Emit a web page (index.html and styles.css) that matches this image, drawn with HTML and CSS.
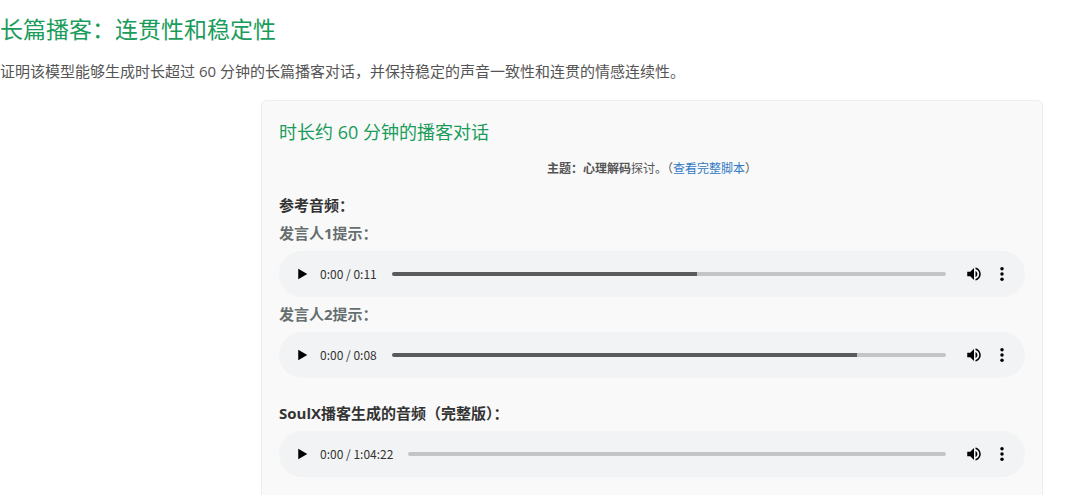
FILE: index.html
```html
<!DOCTYPE html>
<html lang="zh-CN">

<head>
    <meta charset="utf-8">
    <meta name="viewport" content="width=device-width, initial-scale=1">
    <title>长篇播客：连贯性和稳定性</title>
    <link rel="stylesheet" href="styles.css">
</head>

<body>
    <!-- shared player icons -->
    <svg class="sprite" aria-hidden="true">
        <symbol id="play" viewBox="0 0 24 24">
            <path d="M7 5v14l12-7z" />
        </symbol>
        <symbol id="volume" viewBox="0 0 24 24">
            <path d="M3 9v6h4l5 5V4L7 9H3zm13.500 3c0-1.770-1.020-3.290-2.500-4.030v8.050c1.480-.730 2.500-2.250 2.500-4.020zM14 3.230v2.060c2.890.860 5 3.540 5 6.710s-2.110 5.850-5 6.710v2.060c4.010-.910 7-4.490 7-8.770s-2.990-7.860-7-8.770z" />
        </symbol>
        <symbol id="more" viewBox="0 0 24 24">
            <circle cx="12" cy="5" r="2.300" />
            <circle cx="12" cy="12" r="2.300" />
            <circle cx="12" cy="19" r="2.300" />
        </symbol>
    </svg>

    <main>
        <h2 class="title">长篇播客：连贯性和稳定性</h2>
        <p class="intro">证明该模型能够生成时长超过 60 分钟的长篇播客对话，并保持稳定的声音一致性和连贯的情感连续性。</p>

        <section class="card">
            <h3 class="card-title">时长约 60 分钟的播客对话</h3>
            <p class="topic"><strong>主题：心理解码</strong>探讨。（<a href="#script">查看完整脚本</a>）</p>

            <h4 class="label">参考音频：</h4>

            <h5 class="label speaker">发言人1提示：</h5>
            <div class="player">
                <button type="button" class="btn" aria-label="播放"><svg><use href="#play" /></svg></button>
                <span class="time">0:00 / 0:11</span>
                <input type="range" class="seek" min="0" max="11" value="0" aria-label="播放进度" style="--buffered: 55%">
                <button type="button" class="btn" aria-label="静音"><svg><use href="#volume" /></svg></button>
                <button type="button" class="btn menu" aria-label="更多选项"><svg><use href="#more" /></svg></button>
            </div>

            <h5 class="label speaker">发言人2提示：</h5>
            <div class="player">
                <button type="button" class="btn" aria-label="播放"><svg><use href="#play" /></svg></button>
                <span class="time">0:00 / 0:08</span>
                <input type="range" class="seek" min="0" max="8" value="0" aria-label="播放进度" style="--buffered: 84%">
                <button type="button" class="btn" aria-label="静音"><svg><use href="#volume" /></svg></button>
                <button type="button" class="btn menu" aria-label="更多选项"><svg><use href="#more" /></svg></button>
            </div>

            <h4 class="label generated">SoulX播客生成的音频（完整版）：</h4>
            <div class="player">
                <button type="button" class="btn" aria-label="播放"><svg><use href="#play" /></svg></button>
                <span class="time">0:00 / 1:04:22</span>
                <input type="range" class="seek" min="0" max="3862" value="0" aria-label="播放进度" style="--buffered: 0%">
                <button type="button" class="btn" aria-label="静音"><svg><use href="#volume" /></svg></button>
                <button type="button" class="btn menu" aria-label="更多选项"><svg><use href="#more" /></svg></button>
            </div>
        </section>
    </main>
</body>

</html>
```
FILE: styles.css
```css
* {
    box-sizing: border-box;
}

body {
    margin: 0;
    padding-top: 14px;
    background: #fff;
    color: #555;
    font-family: "Open Sans", "Noto Sans CJK SC", sans-serif;
    font-size: 15px;
}

h2, h3, h4, h5, p {
    margin: 0;
}

.sprite {
    display: none;
}

.title {
    margin-bottom: 15px;
    color: #1a9c5b;
    font-size: 23px;
    font-weight: 400;
    line-height: 30px;
}

.intro {
    margin-bottom: 17px;
    line-height: 24px;
}

.card {
    margin: 0 37px 0 261px;
    padding: 18px 17px 24px;
    background: #f9f9f9;
    border: 1px solid #ededed;
    border-radius: 6px;
}

.card-title {
    margin-bottom: 14px;
    color: #1a9c5b;
    font-size: 18px;
    font-weight: 400;
    line-height: 26px;
}

.topic {
    margin-bottom: 12px;
    font-size: 12px;
    line-height: 20px;
    text-align: center;
}

.topic a {
    color: #2f78c4;
    text-decoration: none;
}

.label {
    color: #333;
    font-size: 15px;
    font-weight: 700;
    line-height: 28px;
}

.speaker {
    color: #666f6f;
}

.generated {
    margin-top: 21px;
}

/* audio player */
.player {
    display: flex;
    align-items: center;
    height: 46px;
    margin: 4px 0 3px;
    padding: 0 11px;
    background: #f1f3f4;
    border-radius: 23px;
}

.btn {
    flex: none;
    display: flex;
    align-items: center;
    justify-content: center;
    width: 24px;
    height: 24px;
    padding: 0;
    background: none;
    border: none;
    cursor: pointer;
}

.btn svg {
    width: 18px;
    height: 18px;
    fill: #000;
}

.menu {
    margin-left: 4px;
}

.time {
    margin: 0 15px 0 6px;
    color: #333;
    font-family: "Noto Sans CJK SC", sans-serif;
    font-size: 12px;
    line-height: 16px;
    white-space: nowrap;
}

.seek {
    flex: 1;
    min-width: 0;
    height: 4px;
    margin: 0 16px 0 0;
    background: linear-gradient(to right, #5a5a5a var(--buffered), #c4c4c4 var(--buffered));
    border-radius: 2px;
    appearance: none;
    cursor: pointer;
}

.seek::-webkit-slider-thumb {
    width: 0;
    height: 0;
    appearance: none;
}
```
